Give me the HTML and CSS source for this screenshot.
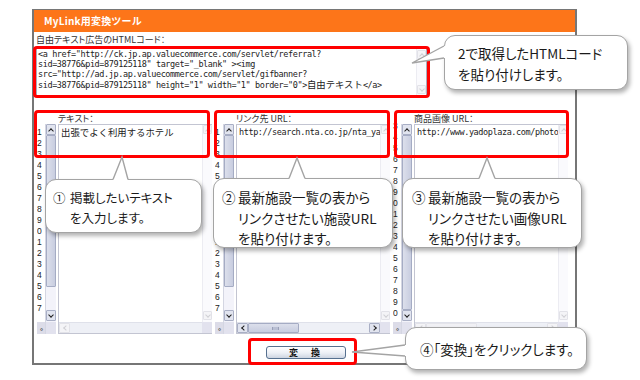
FILE: index.html
```html
<!DOCTYPE html>
<html>

<head>
	<meta charset="utf-8" />
	<title>MyLink用変換ツール</title>
	<meta name="viewport" content="width=device-width, initial-scale=1" />
	<link rel="stylesheet" href="styles.css">
</head>

<body>
	<div class="stage">
		<div class="window">
			<div class="titlebar">MyLink用変換ツール</div>
			<div class="panel">
				<div class="field-label">自由テキスト広告のHTMLコード：</div>
				<div class="code-box">
					<div class="code-text">
						<div class="code-line">&lt;a href="http://ck.jp.ap.valuecommerce.com/servlet/referral?</div>
						<div class="code-line">sid=38776&amp;pid=879125118" target="_blank" &gt;&lt;img</div>
						<div class="code-line">src="http://ad.jp.ap.valuecommerce.com/servlet/gifbanner?</div>
						<div class="code-line">sid=38776&amp;pid=879125118" height="1" width="1" border="0"&gt;<span class="jp">自由テキスト</span>&lt;/a&gt;</div>
					</div>
					<div class="vbar">
						<div class="sb-btn up off"></div>
						<div class="sb-track"></div>
						<div class="sb-btn down off"></div>
					</div>
				</div>

				<div class="columns">
					<div class="col">
						<div class="col-label">テキスト：</div>
						<div class="editor">
							<div class="gutter">
								<div class="nums">1<br>2<br>3<br>4<br>5<br>6<br>7<br>8<br>9<br>0<br>1<br>2<br>3<br>4<br>5<br>6<br>7</div>
								<div class="gutter-corner">‹›</div>
							</div>
							<div class="gscroll">
								<div class="sb-btn up"></div>
								<div class="sb-thumb"></div>
								<div class="sb-track"></div>
								<div class="sb-btn down"></div>
								<div class="sb-corner"></div>
							</div>
							<div class="pane">
								<div class="pane-text jp">出張でよく利用するホテル</div>
								<div class="vbar">
									<div class="sb-btn up off"></div>
									<div class="sb-track"></div>
									<div class="sb-btn down off"></div>
								</div>
								<div class="hbar">
									<div class="sb-btn left off"></div>
									<div class="sb-track"></div>
								</div>
								<div class="sb-corner"></div>
							</div>
						</div>
					</div>

					<div class="col">
						<div class="col-label">リンク先 URL：</div>
						<div class="editor">
							<div class="gutter">
								<div class="nums">1<br>2<br>3<br>4<br>5<br>6<br>7<br>8<br>9<br>0<br>1<br>2<br>3<br>4<br>5<br>6<br>7</div>
								<div class="gutter-corner">‹›</div>
							</div>
							<div class="gscroll">
								<div class="sb-btn up"></div>
								<div class="sb-thumb"></div>
								<div class="sb-track"></div>
								<div class="sb-btn down"></div>
								<div class="sb-corner"></div>
							</div>
							<div class="pane">
								<div class="pane-text">http://search.nta.co.jp/nta_ya</div>
								<div class="vbar">
									<div class="sb-btn up off"></div>
									<div class="sb-track"></div>
									<div class="sb-btn down off"></div>
								</div>
								<div class="hbar">
									<div class="sb-btn left"></div>
									<div class="sb-thumb wide"></div>
									<div class="sb-track"></div>
									<div class="sb-btn right"></div>
								</div>
								<div class="sb-corner"></div>
							</div>
						</div>
					</div>

					<div class="col">
						<div class="col-label">商品画像 URL：</div>
						<div class="editor">
							<div class="gutter">
								<div class="nums shifted">3<br>4<br>5<br>6<br>7<br>8<br>9<br>0<br>1<br>2<br>3<br>4<br>5<br>6<br>7<br>8<br>9<br>0</div>
								<div class="gutter-corner">‹›</div>
							</div>
							<div class="gscroll">
								<div class="sb-btn up"></div>
								<div class="sb-thumb long"></div>
								<div class="sb-btn down"></div>
								<div class="sb-corner"></div>
							</div>
							<div class="pane">
								<div class="pane-text">http://www.yadoplaza.com/photo</div>
								<div class="vbar">
									<div class="sb-btn up off"></div>
									<div class="sb-track"></div>
									<div class="sb-btn down off"></div>
								</div>
								<div class="hbar">
									<div class="sb-btn left off"></div>
									<div class="sb-thumb wide off"></div>
									<div class="sb-track"></div>
									<div class="sb-btn right off"></div>
								</div>
								<div class="sb-corner"></div>
							</div>
						</div>
					</div>
				</div>

				<div class="actions">
					<button class="convert">変&emsp;換</button>
				</div>
			</div>
		</div>

		<!-- red highlight marks -->
		<div class="mark m-code"></div>
		<div class="mark m-text"></div>
		<div class="mark m-link"></div>
		<div class="mark m-image"></div>
		<div class="mark m-button"></div>

		<!-- callouts -->
		<div class="callout c-code">
			<p>2で取得したHTMLコード<br>を貼り付けします。</p>
		</div>
		<svg class="tail t-code" width="38" height="22" viewBox="0 0 38 22">
			<polygon points="2,19 34,2 38,2 38,14 34,14" fill="#fff" />
			<polyline points="34,2 2,19 34,14" fill="none" stroke="#a4a4a4" stroke-width="1.4" />
		</svg>

		<div class="callout c-text">
			<span class="num">①</span>
			<p>掲載したいテキスト<br>を入力します。</p>
		</div>
		<svg class="tail t-text" width="22" height="28" viewBox="0 0 22 28">
			<polygon points="3,24 12,2 18,24 18,28 3,28" fill="#fff" />
			<polyline points="3,24.5 12,2 18,24.5" fill="none" stroke="#a4a4a4" stroke-width="1.4" />
		</svg>

		<div class="callout c-link">
			<span class="num">②</span>
			<p>最新施設一覧の表から<br>リンクさせたい施設URL<br>を貼り付けます。</p>
		</div>
		<svg class="tail t-link" width="22" height="27" viewBox="0 0 22 27">
			<polygon points="3,23 11,3 19,23 19,27 3,27" fill="#fff" />
			<polyline points="3,23.5 11,3 19,23.5" fill="none" stroke="#a4a4a4" stroke-width="1.4" />
		</svg>

		<div class="callout c-image">
			<span class="num">③</span>
			<p>最新施設一覧の表から<br>リンクさせたい画像URL<br>を貼り付けます。</p>
		</div>
		<svg class="tail t-image" width="22" height="27" viewBox="0 0 22 27">
			<polygon points="3,23 11,3 19,23 19,27 3,27" fill="#fff" />
			<polyline points="3,23.5 11,3 19,23.5" fill="none" stroke="#a4a4a4" stroke-width="1.4" />
		</svg>

		<div class="callout c-button">
			<p>④「変換」をクリックします。</p>
		</div>
		<svg class="tail t-button" width="60" height="17" viewBox="0 0 60 17">
			<polygon points="2,10 55,3 60,3 60,14 55,14" fill="#fff" />
			<polyline points="55,3 2,10 55,14" fill="none" stroke="#a4a4a4" stroke-width="1.4" />
		</svg>
	</div>
</body>

</html>
```

FILE: styles.css
```css
* {
	box-sizing: border-box;
}

body {
	margin: 0;
	background: #ffffff;
	font-family: "Noto Sans CJK JP", sans-serif;
	color: #222222;
}

.stage {
	position: relative;
	width: 640px;
	height: 380px;
	overflow: hidden;
	padding: 9px 0 0 32px;
}

/* tool window */

.window {
	width: 545px;
	height: 356px;
	border: 2px solid #767676;
	border-top-width: 1px;
	display: flex;
	flex-direction: column;
}

.titlebar {
	height: 22px;
	background: #fd7519;
	color: #ffffff;
	font-size: 10px;
	font-weight: bold;
	line-height: 22px;
	padding-left: 10px;
	letter-spacing: 0.2px;
}

.panel {
	flex: 1;
	padding: 3px 0 0 2px;
	display: flex;
	flex-direction: column;
}

.field-label,
.col-label {
	font-size: 9px;
	line-height: 10px;
	height: 10px;
	font-feature-settings: "palt";
	color: #333333;
}

.code-box {
	margin-top: 3px;
	width: 391px;
	height: 48px;
	border: 1px solid #a9adbd;
	display: flex;
}

.code-text {
	flex: 1;
	padding-left: 1px;
	font-family: "DejaVu Sans Mono", "Noto Sans CJK JP", monospace;
	font-size: 8.5px;
	letter-spacing: -0.4px;
	line-height: 10px;
	overflow: hidden;
}

.code-line {
	white-space: nowrap;
	height: 10px;
}

.jp {
	font-family: "Noto Sans CJK JP", sans-serif;
	letter-spacing: 0;
	font-size: 9.4px;
}

/* three editors */

.columns {
	margin-top: 17px;
	margin-left: 1px;
	display: grid;
	grid-template-columns: repeat(3, 175px);
	gap: 3px;
}

.col-label {
	height: 11px;
	line-height: 11px;
	padding-left: 21px;
}

.editor {
	height: 210px;
	display: flex;
}

.gutter {
	width: 8px;
	display: flex;
	flex-direction: column;
}

.nums {
	flex: 1;
	overflow: hidden;
	padding-top: 3px;
	font-family: "Liberation Sans", sans-serif;
	font-size: 8.5px;
	line-height: 11px;
	color: #222222;
}

.nums.shifted {
	padding-top: 0;
	margin-top: -3px;
}

.gutter-corner {
	height: 12px;
	background: #dcdce8;
	font-size: 7px;
	line-height: 12px;
	text-align: center;
	color: #333333;
	letter-spacing: -1px;
}

.gscroll {
	width: 11px;
	margin-right: 2px;
	display: flex;
	flex-direction: column;
	background: #f3f3fa;
	border-left: 1px solid #d4d6e2;
}

.gscroll .sb-btn {
	height: 11px;
}

.gscroll .sb-thumb {
	height: 152px;
}

.gscroll .sb-thumb.long {
	height: auto;
	flex: 1;
}

.gscroll .sb-track {
	flex: 1;
}

.gscroll .sb-corner {
	margin-top: 1px;
	height: 12px;
}

.pane {
	flex: 1;
	display: grid;
	grid-template-columns: 1fr 10px;
	grid-template-rows: 1fr 11px;
	border: 1px solid #c3c5d2;
	border-right: none;
	min-width: 0;
}

.pane-text {
	padding: 2px 0 0 2px;
	font-family: "DejaVu Sans Mono", "Noto Sans CJK JP", monospace;
	font-size: 8.5px;
	letter-spacing: -0.4px;
	line-height: 11px;
	white-space: nowrap;
	overflow: hidden;
	min-width: 0;
}

.pane-text.jp {
	font-family: "Noto Sans CJK JP", sans-serif;
	font-size: 9.4px;
	letter-spacing: 0;
}

/* scrollbars */

.vbar {
	display: flex;
	flex-direction: column;
	background: #fafafd;
	border-left: 1px solid #ececf2;
}

.vbar .sb-btn {
	height: 9px;
}

.vbar .sb-track,
.hbar .sb-track {
	flex: 1;
}

.code-box .vbar {
	width: 10px;
	padding: 1px 0;
}

.pane .vbar .sb-btn.down {
	margin-bottom: 2px;
}

.hbar {
	display: flex;
	background: #eef0f6;
	border-top: 1px solid #dfe1ea;
}

.hbar .sb-btn {
	width: 11px;
}

.hbar .sb-thumb.wide {
	width: 51px;
}

.sb-corner {
	background: #e2e2ee;
}

.sb-btn {
	position: relative;
	background: #e1e4ef;
	border: 1px solid #a9afc5;
	border-radius: 1px;
}

.sb-btn::after {
	content: "";
	position: absolute;
	left: 50%;
	top: 50%;
	width: 3px;
	height: 3px;
	border-left: 1.5px solid #1e1e1e;
	border-top: 1.5px solid #1e1e1e;
}

.sb-btn.up::after {
	transform: translate(-50%, -25%) rotate(45deg);
}

.sb-btn.down::after {
	transform: translate(-50%, -75%) rotate(225deg);
}

.sb-btn.left::after {
	transform: translate(-25%, -50%) rotate(-45deg);
}

.sb-btn.right::after {
	transform: translate(-75%, -50%) rotate(135deg);
}

.sb-btn.off {
	background: #f4f4f7;
	border-color: #e2e2e8;
}

.sb-btn.off::after {
	border-color: #cfcfd4;
}

.sb-thumb {
	background: linear-gradient(90deg, #dcdfeb, #c8cde0);
	border: 1px solid #a5acc4;
	border-radius: 1px;
}

.hbar .sb-thumb {
	background: linear-gradient(#dcdfeb, #c8cde0);
	position: relative;
}

.hbar .sb-thumb::after {
	content: "";
	position: absolute;
	left: 50%;
	top: 3px;
	width: 5px;
	height: 3px;
	margin-left: -2px;
	border-left: 1px solid #9aa0b8;
	border-right: 1px solid #9aa0b8;
	background: #b9bfd3;
}

.sb-thumb.off {
	background: #f1f1f5;
	border-color: #e4e4ea;
}

.sb-thumb.off::after {
	display: none;
}

/* button row */

.actions {
	margin-top: 12px;
	display: flex;
	justify-content: center;
}

.convert {
	width: 80px;
	height: 13px;
	padding: 0;
	border: 1px solid #56708f;
	border-radius: 3px;
	background: linear-gradient(#ffffff, #eceff5 55%, #cdd4e1);
	font-family: "Noto Sans CJK JP", sans-serif;
	font-size: 9px;
	font-weight: bold;
	line-height: 11px;
	letter-spacing: 2px;
	color: #111111;
}

/* annotations */

.mark {
	position: absolute;
	border: 3px solid #ff0000;
	border-radius: 4px;
}

.m-code {
	left: 33px;
	top: 46px;
	width: 397px;
	height: 52px;
}

.m-text {
	left: 34px;
	top: 110px;
	width: 176px;
	height: 48px;
}

.m-link {
	left: 214px;
	top: 110px;
	width: 176px;
	height: 48px;
}

.m-image {
	left: 394px;
	top: 110px;
	width: 175px;
	height: 48px;
}

.m-button {
	left: 248px;
	top: 338px;
	width: 109px;
	height: 27px;
}

.callout {
	position: absolute;
	display: flex;
	background: #ffffff;
	border: 1.5px solid #a4a4a4;
	border-radius: 11px;
	box-shadow: 2px 3px 4px rgba(0, 0, 0, 0.3);
	font-size: 13.5px;
	line-height: 20.5px;
	font-feature-settings: "palt";
	color: #1a1a1a;
}

.callout p {
	margin: 0;
}

.callout .num {
	width: 16px;
	flex: none;
}

.c-code {
	left: 444px;
	top: 35px;
	width: 184px;
	height: 55px;
	padding: 7px 0 0 13px;
}

.c-text {
	left: 45px;
	top: 179px;
	width: 157px;
	height: 54px;
	padding: 8px 0 0 7px;
	font-size: 12.5px;
	line-height: 19.5px;
}

.c-text .num {
	width: 17px;
}

.c-link {
	left: 213px;
	top: 178px;
	width: 180px;
	height: 70px;
	padding: 8px 0 0 8px;
}

.c-image {
	left: 402px;
	top: 178px;
	width: 180px;
	height: 70px;
	padding: 8px 0 0 9px;
}

.c-button {
	left: 405px;
	top: 327px;
	width: 182px;
	height: 43px;
	padding: 11px 0 0 14px;
}

.tail {
	position: absolute;
}

.t-code {
	left: 410px;
	top: 44px;
}

.t-text {
	left: 110px;
	top: 155px;
}

.t-link {
	left: 286px;
	top: 155px;
}

.t-image {
	left: 476px;
	top: 155px;
}

.t-button {
	left: 350px;
	top: 342px;
}
```
